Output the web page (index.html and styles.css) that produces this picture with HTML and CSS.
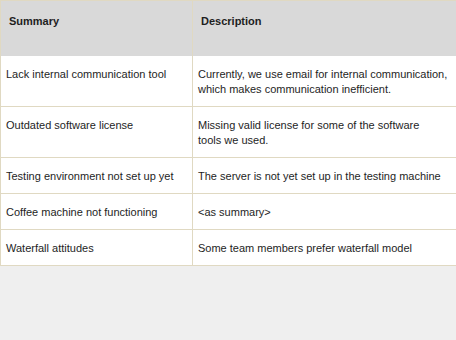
FILE: index.html
```html
<!DOCTYPE html>
<html lang="en">
<head>
    <meta charset="UTF-8">
    <meta name="viewport" content="width=device-width, initial-scale=1.0">
    <title>Issues</title>
    <link rel="stylesheet" href="styles.css">
</head>
<body>

<table class="issues">
    <thead>
        <tr>
            <th class="col-summary">Summary</th>
            <th>Description</th>
        </tr>
    </thead>
    <tbody>
        <tr>
            <td>Lack internal communication tool</td>
            <td>Currently, we use email for internal communication,<br>which makes communication inefficient.</td>
        </tr>
        <tr>
            <td>Outdated software license</td>
            <td>Missing valid license for some of the software<br>tools we used.</td>
        </tr>
        <tr>
            <td>Testing environment not set up yet</td>
            <td>The server is not yet set up in the testing machine</td>
        </tr>
        <tr>
            <td>Coffee machine not functioning</td>
            <td>&lt;as summary&gt;</td>
        </tr>
        <tr>
            <td>Waterfall attitudes</td>
            <td>Some team members prefer waterfall model</td>
        </tr>
    </tbody>
</table>

</body>
</html>
```

FILE: styles.css
```css
body {
    margin: 0;
    background-color: #efefef;
    font-family: "Liberation Sans", Arial, sans-serif;
    font-size: 11px;
    color: #1e1e1e;
}
.issues {
    width: 100%;
    border-collapse: collapse;
    background-color: #fff;
    border-top: 1px solid #e0d9c2;
    border-left: 1px solid #e0d9c2;
}
.issues th {
    background-color: #d9d9d9;
    font-weight: bold;
    text-align: left;
    vertical-align: top;
    height: 55px;
    padding: 13px 8px 0 8px;
    line-height: 14px;
    box-sizing: border-box;
}
.issues td {
    padding: 11px 4px 9px 5px;
    line-height: 15px;
    vertical-align: top;
    white-space: nowrap;
    border-bottom: 1px solid #e0d9c2;
}
.issues th + th,
.issues td + td {
    border-left: 1px solid #e0d9c2;
}
.col-summary {
    width: 192px;
    box-sizing: border-box;
}
```
